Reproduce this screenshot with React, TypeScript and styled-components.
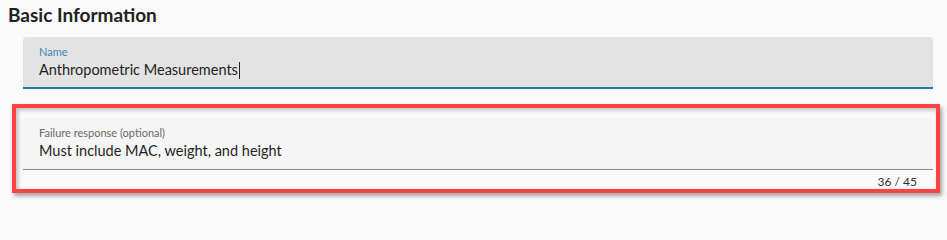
import React from "react";
import styled, { createGlobalStyle } from "styled-components";

const GlobalStyle = createGlobalStyle`
  html, body {
    margin: 0;
    padding: 0;
    background: #fafafa;
    font-family: Lato, "Open Sans", "Liberation Sans", sans-serif;
  }
`;

const Page = styled.div`
  width: 947px;
  height: 205px;
  overflow: hidden;
  padding-top: 3px;
  box-sizing: border-box;
`;

const Title = styled.h2`
  margin: 0 0 10px 8px;
  font-size: 19px;
  line-height: 24px;
  font-weight: 700;
  color: #212121;
`;

const Fields = styled.div`
  display: flex;
  flex-direction: column;
  gap: 29px;
  padding: 0 14px 0 23px;
`;

const FieldBox = styled.div<{ $focused?: boolean }>`
  display: flex;
  flex-direction: column;
  height: 52px;
  box-sizing: border-box;
  padding: 8px 16px 0;
  border-radius: 4px 4px 0 0;
  background: ${(p) => (p.$focused ? "#e3e3e3" : "#f5f5f5")};
  border-bottom: ${(p) => (p.$focused ? "2px solid #2a78a6" : "1px solid #8c8c8c")};
`;

const Label = styled.span<{ $focused?: boolean }>`
  font-size: 11px;
  line-height: 14px;
  color: ${(p) => (p.$focused ? "#3f86b3" : "#6a6a6a")};
`;

const Value = styled.span`
  display: flex;
  align-items: center;
  font-size: 14.5px;
  line-height: 22px;
  color: #1f1f1f;
`;

const Caret = styled.span`
  display: inline-block;
  width: 1px;
  height: 17px;
  margin-left: 1px;
  background: #222;
`;

const Highlight = styled.div`
  position: relative;

  &::after {
    content: "";
    position: absolute;
    left: -11px;
    top: -14px;
    right: -7px;
    bottom: -4px;
    border: 4px solid #ff4242;
    pointer-events: none;
    box-shadow: 2px 3px 4px rgba(0, 0, 0, 0.35),
      inset 2px 2px 4px rgba(0, 0, 0, 0.25);
  }
`;

const Helper = styled.div`
  display: flex;
  justify-content: flex-end;
  height: 19px;
  padding: 4px 16px 0;
  box-sizing: border-box;
  font-size: 12px;
  line-height: 15px;
  color: #333;
`;

export default function App() {
  return (
    <Page>
      <GlobalStyle />
      <Title>Basic Information</Title>
      <Fields>
        <FieldBox $focused>
          <Label $focused>Name</Label>
          <Value>
            Anthropometric Measurements
            <Caret />
          </Value>
        </FieldBox>
        <Highlight>
          <FieldBox>
            <Label>Failure response (optional)</Label>
            <Value>Must include MAC, weight, and height</Value>
          </FieldBox>
          <Helper>36 / 45</Helper>
        </Highlight>
      </Fields>
    </Page>
  );
}
